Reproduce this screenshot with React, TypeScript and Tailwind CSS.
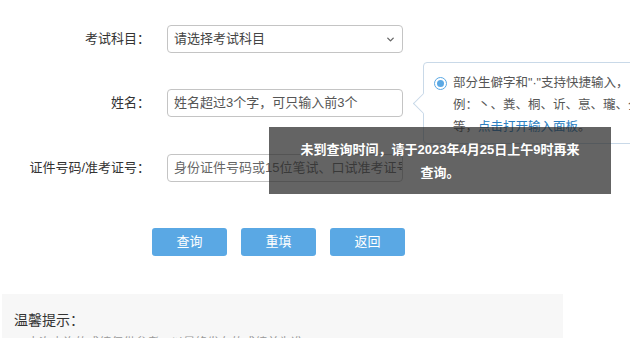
import { ChevronDown } from "lucide-react"

const font = "font-['Liberation_Sans','Noto_Sans_CJK_SC',sans-serif]"

function Row({ label, children }: { label: string; children: React.ReactNode }) {
  return (
    <div className="flex items-center h-[28px]">
      <div className="w-[150px] text-right text-[13px] text-[#333]">{label}</div>
      <div className="ml-[17px] w-[236px] h-full">{children}</div>
    </div>
  )
}

export default function App() {
  return (
    <div className={`relative w-[630px] h-[338px] overflow-hidden bg-white ${font}`}>
      <div className="flex flex-col pt-[25px]">
        <Row label="考试科目：">
          <div className="h-full flex items-center justify-between border border-[#c4c4c4] rounded-[4px] pl-[6px] pr-[6px] text-[13px] text-[#444]">
            <span>请选择考试科目</span>
            <ChevronDown size={11} strokeWidth={3} className="text-[#666]" />
          </div>
        </Row>
        <div className="h-[36px]" />
        <Row label="姓名：">
          <div className="h-full flex items-center border border-[#c4c4c4] rounded-[4px] pl-[6px] text-[13px] text-[#555]">
            姓名超过3个字，可只输入前3个
          </div>
        </Row>
        <div className="h-[37px]" />
        <Row label="证件号码/准考证号：">
          <div className="h-full flex items-center border border-[#c4c4c4] rounded-[4px] pl-[6px] text-[13px] text-[#666] whitespace-nowrap overflow-hidden">
            身份证件号码或15位笔试、口试准考证号
          </div>
        </Row>

        <div className="flex gap-[14px] pl-[152px] mt-[46px]">
          {["查询", "重填", "返回"].map((t) => (
            <button key={t} className="w-[75px] h-[28px] rounded-[3px] bg-[#5aa8e4] text-white text-[13px]">
              {t}
            </button>
          ))}
        </div>

        <div className="mt-[38px] ml-[2px] w-[561px] h-[60px] bg-[#f7f7f7] px-[12px] pt-[17px]">
          <p className="text-[14px] text-[#333] leading-[18px]">温馨提示：</p>
          <p className="mt-[6px] text-[12px] text-[#999] leading-[16px]">1. 本次查询的成绩仅供参考，以最终发布的成绩单为准。</p>
        </div>
      </div>

      {/* help popover */}
      <div className="absolute left-[423px] top-[62px] w-[260px] h-[82px] border border-[#c9d9e8] rounded-[4px] bg-white pl-[10px] pt-[9px] text-[12.5px] text-[#555] leading-[22px]">
        <div className="absolute -left-[8px] top-[33px] w-[15px] h-[15px] rotate-45 bg-white border-l border-b border-[#c9d9e8]" />
        <div className="relative flex items-center gap-[6px]">
          <span className="w-[13px] h-[13px] rounded-full border border-[#5aa8e4] flex items-center justify-center">
            <span className="w-[7px] h-[7px] rounded-full bg-[#5aa8e4]" />
          </span>
          <span>部分生僻字和"·"支持快捷输入，</span>
        </div>
        <div className="relative pl-[19px]">例：丶、粪、桐、䜣、恴、瓏、仝</div>
        <div className="relative pl-[19px]">
          等，<span className="text-[#2d7fc1]">点击打开输入面板</span>。
        </div>
      </div>

      {/* toast */}
      <div className="absolute left-[269px] top-[127px] w-[342px] h-[67px] bg-[rgba(40,40,40,0.72)] flex flex-col items-center justify-center text-white font-bold text-[13px] leading-[23px]">
        <span>未到查询时间，请于2023年4月25日上午9时再来</span>
        <span>查询。</span>
      </div>
    </div>
  )
}
